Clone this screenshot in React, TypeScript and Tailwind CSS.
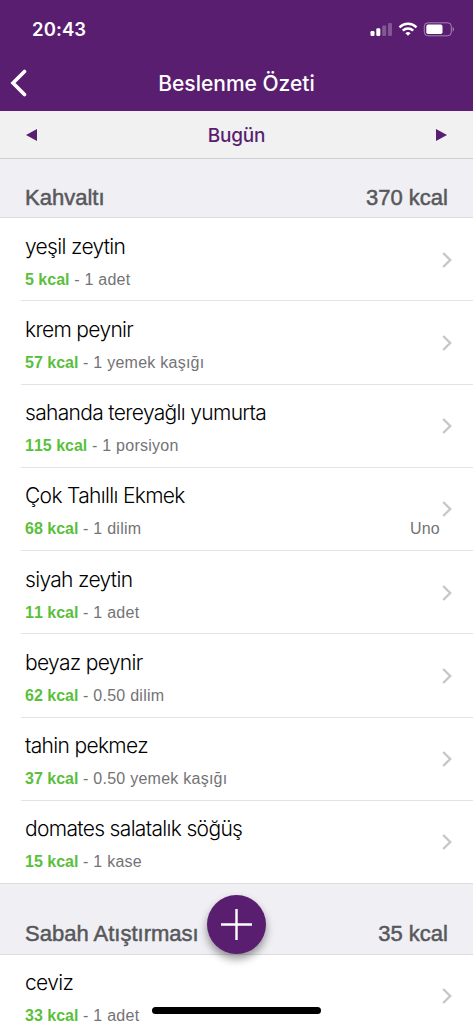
import React from "react"

type Item = {
  name: string
  kcal: number
  amount: string
  brand?: string
}

type Meal = {
  title: string
  total: number
  items: Item[]
}

const meals: Meal[] = [
  {
    title: "Kahvaltı",
    total: 370,
    items: [
      { name: "yeşil zeytin", kcal: 5, amount: "1 adet" },
      { name: "krem peynir", kcal: 57, amount: "1 yemek kaşığı" },
      { name: "sahanda tereyağlı yumurta", kcal: 115, amount: "1 porsiyon" },
      { name: "Çok Tahıllı Ekmek", kcal: 68, amount: "1 dilim", brand: "Uno" },
      { name: "siyah zeytin", kcal: 11, amount: "1 adet" },
      { name: "beyaz peynir", kcal: 62, amount: "0.50 dilim" },
      { name: "tahin pekmez", kcal: 37, amount: "0.50 yemek kaşığı" },
      { name: "domates salatalık söğüş", kcal: 15, amount: "1 kase" },
    ],
  },
  {
    title: "Sabah Atıştırması",
    total: 35,
    items: [{ name: "ceviz", kcal: 33, amount: "1 adet" }],
  },
]

function StatusIcons() {
  return (
    <svg className="mt-0.5" width="86" height="16" viewBox="0 0 86 16" fill="white">
      {/* Signal */}
      <rect x="0.5" y="9" width="4" height="5" rx="1.2" />
      <rect x="6.3" y="6.3" width="4" height="7.7" rx="1.2" />
      <rect x="12.2" y="3.5" width="4" height="10.5" rx="1.2" opacity="0.25" />
      <rect x="18" y="1" width="4" height="13" rx="1.2" opacity="0.25" />
      {/* Wifi */}
      <g fill="none" stroke="white" strokeWidth="2.5">
        <path d="M29.500 5.300a12.200 12.200 0 0 1 17 0" />
        <path d="M32.800 8.600a7.400 7.400 0 0 1 10.400 0" />
      </g>
      <path d="M38 13.800l-2.600-2.600a3.800 3.800 0 0 1 5.200 0z" />
      {/* Battery */}
      <rect x="54.3" y="0.8" width="27" height="13" rx="3.6" fill="none" stroke="white" opacity="0.45" />
      <rect x="56.3" y="2.6" width="16.2" height="9.4" rx="1.8" />
      <path d="M82.700 5c1.500.6 1.500 4 0 4.600z" opacity="0.5" />
    </svg>
  )
}

function MealRow({ item, last }: { item: Item; last: boolean }) {
  return (
    <li className="flex h-[83.25px] pl-[21px]">
      <div
        className={
          last
            ? "flex grow justify-between pl-1"
            : "flex grow justify-between border-b border-[#e3e3e5] pl-1"
        }
      >
        <div className="pt-[14.6px]">
          <p className="text-[21px] leading-7 font-light tracking-[-0.67px] whitespace-nowrap text-black">
            {item.name}
          </p>
          <p className="mt-[9px] font-['Liberation_Sans',sans-serif] text-[16px] leading-5 tracking-[0.25px] whitespace-nowrap text-[#737375] [font-kerning:none]">
            <span className="font-bold tracking-normal text-[#5abf3c]">{item.kcal} kcal</span> - {item.amount}
          </p>
        </div>
        <div className="flex w-[90px] flex-col items-end pt-[33.6px] pr-5">
          <svg width="12" height="16" viewBox="0 0 12 16" fill="none" stroke="#c7c7cb" strokeWidth="2.4">
            <path d="M2.200 1l7 7-7 7" />
          </svg>
          {item.brand && (
            <p className="mt-0.5 pr-[13px] font-['Liberation_Sans',sans-serif] text-[16px] leading-5 tracking-[0.25px] text-[#737375]">
              {item.brand}
            </p>
          )}
        </div>
      </div>
    </li>
  )
}

export default function App() {
  return (
    <div className="relative flex h-[1024px] w-[473px] flex-col overflow-hidden bg-white font-['Inter','Liberation_Sans',sans-serif]">
      <header className="h-[111px] shrink-0 bg-[#5a1e70] text-white">
        <div className="flex h-[58px] items-center justify-between pr-[17px] pl-8">
          <span className="pt-0.5 text-[18.5px] font-semibold tracking-[0.1px]">20:43</span>
          <StatusIcons />
        </div>
        <div className="grid h-[50px] grid-cols-[40px_1fr_40px] items-center">
          <svg className="ml-[10px]" width="18" height="28" viewBox="0 0 18 28" fill="none" stroke="white" strokeWidth="3.6" strokeLinecap="round">
            <path d="M14.500 2.500L3 14l11.500 11.500" />
          </svg>
          <h1 className="pt-0.5 text-center text-[21px] font-medium">Beslenme Özeti</h1>
        </div>
      </header>

      {/* Day picker */}
      <div className="flex h-12 shrink-0 items-center justify-between border-b border-[#cfcfd3] bg-[#f1f1f1] px-[26px] text-[#5a1e70]">
        <svg width="11" height="12" viewBox="0 0 11 12" fill="currentColor">
          <path d="M0 6L11 0v12z" />
        </svg>
        <span className="pt-1 text-[19px] font-medium tracking-[-0.2px]">Bugün</span>
        <svg width="11" height="12" viewBox="0 0 11 12" fill="currentColor">
          <path d="M11 6L0 0v12z" />
        </svg>
      </div>

      {meals.map((meal, index) => (
        <section key={meal.title} className="shrink-0">
          <div
            className={
              index === 0
                ? "flex h-[59px] items-end justify-between border-b border-[#dcdce0] bg-[#efeff4] px-[25px] pb-[5px] font-['Liberation_Sans',sans-serif] text-[22px] leading-7 text-[#58585b] [-webkit-text-stroke:0.5px_#58585b]"
                : "-mt-[0.6px] flex h-[71.4px] items-end justify-between border-y border-[#dcdce0] bg-[#efeff4] px-[25px] pb-[5.5px] font-['Liberation_Sans',sans-serif] text-[22px] leading-7 text-[#58585b] [-webkit-text-stroke:0.5px_#58585b]"
            }
          >
            <h2>{meal.title}</h2>
            <span>{meal.total} kcal</span>
          </div>
          <ul>
            {meal.items.map((item, i) => (
              <MealRow key={item.name} item={item} last={i === meal.items.length - 1} />
            ))}
          </ul>
        </section>
      ))}

      {/* Add button */}
      <button className="absolute top-[895px] left-[207px] flex size-[59px] items-center justify-center rounded-full bg-[#5a1e70] shadow-[0_5px_9px_rgba(0,0,0,0.4)]">
        <svg width="31" height="31" viewBox="0 0 31 31" stroke="white" strokeWidth="2.4">
          <path d="M15.500 0v31M0 15.500h31" />
        </svg>
      </button>

      {/* Home indicator */}
      <div className="absolute bottom-[10px] left-[152px] h-[7px] w-[169px] rounded-full bg-black" />
    </div>
  )
}
